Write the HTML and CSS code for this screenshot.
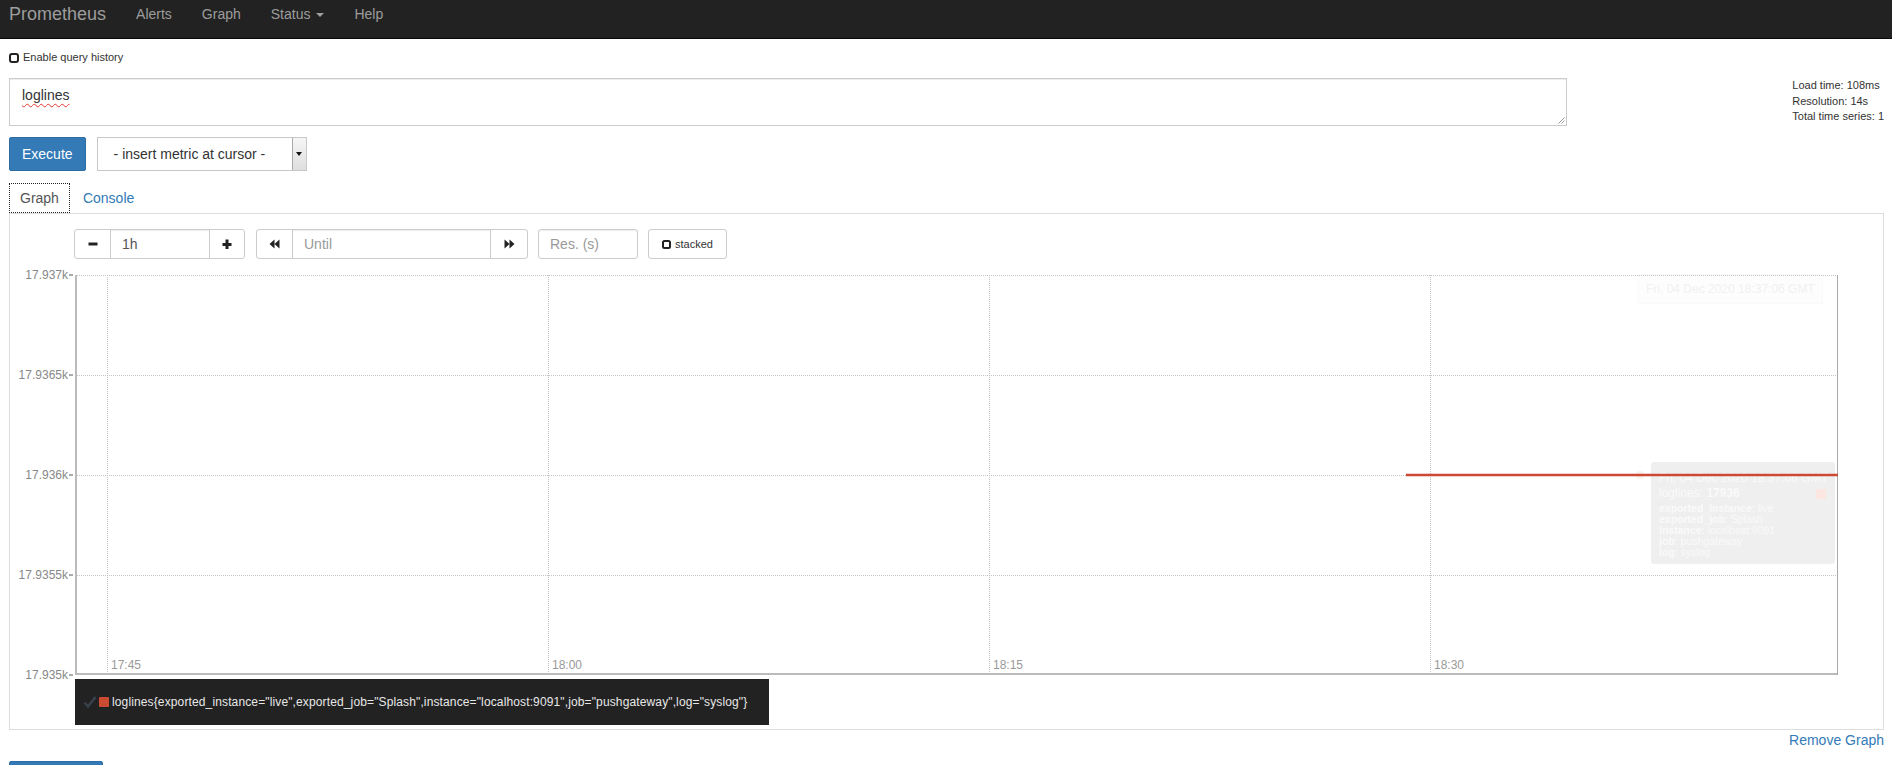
FILE: index.html
```html
<!DOCTYPE html>
<html lang="en">
	<head>
		<meta charset="utf-8">
		<title>Prometheus Time Series Collection and Processing Server</title>
		<link rel="stylesheet" href="styles.css">
	</head>
	<body>
		<nav class="navbar">
			<a class="brand" href="#">Prometheus</a>
			<a class="nav-link" href="#">Alerts</a>
			<a class="nav-link" href="#">Graph</a>
			<a class="nav-link" href="#">Status <span class="caret"></span></a>
			<a class="nav-link" href="#">Help</a>
		</nav>

		<div class="page">
			<label class="history-toggle"><span class="check-box"></span>Enable query history</label>

			<div class="query-row">
				<div class="expr-input">
					<span class="misspelled">loglines</span>
					<svg class="resize-grip" width="7" height="7" viewBox="0 0 7 7">
						<path d="M6.5 0.5 0.5 6.5M6.5 3.5 3.5 6.5" stroke="#999" stroke-width="1" fill="none"/>
					</svg>
				</div>
				<div class="eval-stats">
					<div>Load time: 108ms</div>
					<div>Resolution: 14s</div>
					<div>Total time series: 1</div>
				</div>
			</div>

			<div class="action-row">
				<button class="btn btn-primary">Execute</button>
				<div class="metric-select">
					<span class="metric-select-text">- insert metric at cursor -</span>
					<span class="select-arrow"></span>
				</div>
			</div>

			<ul class="tabs">
				<li class="tab active">Graph</li>
				<li class="tab"><a href="#">Console</a></li>
			</ul>

			<div class="tab-panel">
				<div class="graph-controls">
					<div class="input-group">
						<button class="ctl-btn first">
							<svg width="10" height="10" viewBox="0 0 10 10"><rect x="0.5" y="3.5" width="9" height="3" fill="#222"/></svg>
						</button>
						<input class="ctl-input range-input" type="text" value="1h">
						<button class="ctl-btn last">
							<svg width="10" height="10" viewBox="0 0 10 10"><path d="M3.5 0.5h3v3.5h3v3h-3v3h-3v-3h-3v-3h3z" fill="#222"/></svg>
						</button>
					</div>
					<div class="input-group time-group">
						<button class="ctl-btn first">
							<svg width="11" height="10" viewBox="0 0 11 10"><path d="M0.5 5 5.5 0.5v9zM5.5 5 10.5 0.5v9z" fill="#222"/></svg>
						</button>
						<input class="ctl-input until-input" type="text" placeholder="Until">
						<button class="ctl-btn last wide">
							<svg width="11" height="10" viewBox="0 0 11 10"><path d="M10.5 5 5.5 0.5v9zM5.5 5 0.5 0.5v9z" fill="#222"/></svg>
						</button>
					</div>
					<input class="ctl-input res-input" type="text" placeholder="Res. (s)">
					<button class="stacked-btn">
						<svg width="9" height="9" viewBox="0 0 9 9"><rect x="1" y="1" width="7" height="7" rx="1.5" fill="none" stroke="#222" stroke-width="2"/></svg>
						stacked
					</button>
				</div>

				<div class="graph-row">
					<div class="y-axis">
						<span class="y-tick">17.937k</span>
						<span class="y-tick">17.9365k</span>
						<span class="y-tick">17.936k</span>
						<span class="y-tick">17.9355k</span>
						<span class="y-tick">17.935k</span>
					</div>
					<div class="plot">
						<div class="x-label">Fri, 04 Dec 2020 18:37:06 GMT</div>
						<div class="hover-item">
							<div class="hover-date">Fri, 04 Dec 2020 18:37:06 GMT</div>
							<div class="hover-value"><span>loglines: <b>17936</b></span><span class="hover-swatch"></span></div>
							<div class="hover-attrs">
								<div><b>exported_instance</b>: live</div>
								<div><b>exported_job</b>: Splash</div>
								<div><b>instance</b>: localhost:9091</div>
								<div><b>job</b>: pushgateway</div>
								<div><b>log</b>: syslog</div>
							</div>
						</div>
						<svg class="plot-lines" width="1763" height="400" viewBox="0 0 1763 400">
							<g stroke="#c4c4c4" stroke-width="1" stroke-dasharray="1 1">
								<line x1="0" y1="0.5" x2="1763" y2="0.5"/>
								<line x1="0" y1="100.5" x2="1763" y2="100.5"/>
								<line x1="0" y1="200.5" x2="1763" y2="200.5"/>
								<line x1="0" y1="300.5" x2="1763" y2="300.5"/>
								<line x1="32.5" y1="0" x2="32.5" y2="400"/>
								<line x1="473.5" y1="0" x2="473.5" y2="400"/>
								<line x1="914.5" y1="0" x2="914.5" y2="400"/>
								<line x1="1355.5" y1="0" x2="1355.5" y2="400"/>
							</g>
							<line x1="1" y1="0" x2="1" y2="400" stroke="#bbb" stroke-width="2"/>
							<line x1="0" y1="399" x2="1763" y2="399" stroke="#bbb" stroke-width="2"/>
							<line x1="1762.5" y1="0" x2="1762.5" y2="400" stroke="#aaa" stroke-width="1"/>
							<g class="x-ticks">
								<text x="36" y="394">17:45</text>
								<text x="477" y="394">18:00</text>
								<text x="918" y="394">18:15</text>
								<text x="1359" y="394">18:30</text>
							</g>
							<circle cx="1565" cy="200" r="4" fill="#cb4b32" fill-opacity="0.08"/>
							<line x1="1331" y1="200" x2="1763" y2="200" stroke="#cc4a33" stroke-width="2.4"/>
						</svg>
					</div>
				</div>

				<div class="legend">
					<svg width="14" height="12" viewBox="0 0 14 12"><path d="M1.5 6.5 5 10.5 12.5 1" stroke="#39414d" stroke-width="2.4" fill="none"/></svg>
					<span class="legend-swatch"></span>
					<span class="legend-text">loglines{exported_instance="live",exported_job="Splash",instance="localhost:9091",job="pushgateway",log="syslog"}</span>
				</div>
			</div>

			<div class="remove-row"><a href="#">Remove Graph</a></div>
			<button class="btn btn-primary add-graph">Add Graph</button>
		</div>
	</body>
</html>
```

FILE: styles.css
```css
* {
	box-sizing: border-box;
}
html, body {
	margin: 0;
	overflow: hidden;
}
body {
	font-family: "Liberation Sans", Arial, sans-serif;
	font-size: 14px;
	line-height: 20px;
	color: #333;
	background: #fff;
}
a {
	color: #337ab7;
	text-decoration: none;
}

.navbar {
	display: flex;
	align-items: flex-start;
	height: 39px;
	padding: 4px 0 0 9px;
	background: #222;
	border-bottom: 1px solid #080808;
}
.brand {
	font-size: 18px;
	line-height: 20px;
	color: #9d9d9d;
}
.nav-link {
	padding: 0 15px;
	color: #9d9d9d;
}
.brand + .nav-link {
	margin-left: 15px;
}
.caret {
	display: inline-block;
	width: 0;
	height: 0;
	margin-left: 2px;
	vertical-align: middle;
	border-top: 4px solid;
	border-left: 4px solid transparent;
	border-right: 4px solid transparent;
}

.page {
	padding: 0 8px 0 9px;
}

.history-toggle {
	display: flex;
	align-items: center;
	gap: 4px;
	margin-top: 11px;
	font-size: 11px;
	line-height: 15px;
}
.check-box {
	width: 10px;
	height: 10px;
	border: 2px solid #222;
	border-radius: 3px;
}

.query-row {
	display: flex;
	align-items: flex-start;
	margin-top: 13px;
}
.expr-input {
	position: relative;
	flex: none;
	width: 1558px;
	height: 48px;
	padding: 6px 12px;
	border: 1px solid #ccc;
	box-shadow: inset 0 1px 1px rgba(0, 0, 0, 0.075);
}
.misspelled {
	text-decoration: underline wavy #e53935;
	text-decoration-thickness: 1px;
	text-underline-offset: 3px;
}
.resize-grip {
	position: absolute;
	right: 1px;
	bottom: 1px;
}
.eval-stats {
	margin-left: auto;
	font-size: 11px;
	line-height: 15.5px;
}

.action-row {
	display: flex;
	gap: 11px;
	margin-top: 11px;
}
.btn {
	font-family: inherit;
	font-size: 14px;
	line-height: 20px;
	padding: 6px 12px;
	border: 1px solid transparent;
	border-radius: 2px;
	cursor: pointer;
}
.btn-primary {
	color: #fff;
	background: #337ab7;
	border-color: #2e6da4;
}
.metric-select {
	display: flex;
	width: 210px;
	height: 34px;
	border: 1px solid #c8c8c8;
	background: #fff;
}
.metric-select-text {
	flex: 1;
	padding-left: 16px;
	line-height: 32px;
	white-space: nowrap;
}
.select-arrow {
	display: flex;
	align-items: center;
	justify-content: center;
	width: 14px;
	border-left: 1px solid #a9a9a9;
	background: linear-gradient(#f6f6f6, #dedede);
}
.select-arrow::after {
	content: "";
	border-top: 4px solid #111;
	border-left: 3px solid transparent;
	border-right: 3px solid transparent;
}

.tabs {
	display: flex;
	list-style: none;
	margin: 12px 0 0;
	padding: 0;
	border-bottom: 1px solid #ddd;
}
.tab {
	margin-right: 2px;
	padding: 4px 10px;
	border: 1px solid transparent;
}
.tab.active {
	color: #555;
	border: 1px dotted #222;
}

.tab-panel {
	padding: 15px 0 4px;
	border: 1px solid #ddd;
	border-top: 0;
}

.graph-controls {
	display: flex;
	height: 30px;
	padding-left: 64px;
}
.input-group {
	display: flex;
}
.time-group {
	margin-left: 11px;
}
.ctl-btn {
	display: flex;
	align-items: center;
	justify-content: center;
	width: 37px;
	height: 30px;
	padding: 0;
	background: #fff;
	border: 1px solid #ccc;
}
.ctl-btn.first {
	margin-right: -1px;
	border-radius: 3px 0 0 3px;
}
.ctl-btn.last {
	width: 36px;
	margin-left: -1px;
	border-radius: 0 3px 3px 0;
}
.ctl-btn.last.wide {
	width: 38px;
}
.ctl-input {
	height: 30px;
	padding: 0 11px;
	font-family: inherit;
	font-size: 14px;
	color: #555;
	border: 1px solid #ccc;
	box-shadow: inset 0 1px 1px rgba(0, 0, 0, 0.075);
	outline: none;
}
.ctl-input::placeholder {
	color: #999;
}
.range-input {
	width: 100px;
}
.until-input {
	width: 199px;
}
.res-input {
	width: 100px;
	margin-left: 10px;
	border-radius: 3px;
}
.stacked-btn {
	display: flex;
	align-items: center;
	gap: 4px;
	width: 79px;
	height: 30px;
	margin-left: 10px;
	padding: 0 0 0 13px;
	font-family: inherit;
	font-size: 11px;
	color: #333;
	background: #fff;
	border: 1px solid #ccc;
	border-radius: 3px;
}

.graph-row {
	display: flex;
	margin-top: 16px;
	padding-right: 45px;
}
.y-axis {
	display: flex;
	flex: none;
	flex-direction: column;
	justify-content: space-between;
	width: 65px;
	margin: -10px 0;
	padding-right: 2px;
	font-size: 12px;
	color: #888;
}
.y-tick {
	display: flex;
	align-items: center;
	justify-content: flex-end;
	height: 20px;
}
.y-tick::after {
	content: "";
	width: 4px;
	height: 2px;
	margin-left: 1px;
	background: #aaa;
}
.plot {
	position: relative;
	flex: 1;
	height: 400px;
}
.plot-lines {
	position: relative;
	z-index: 1;
	display: block;
	overflow: visible;
}
.x-ticks {
	font-family: "Liberation Sans", Arial, sans-serif;
	font-size: 12px;
	fill: #999;
}
.x-label {
	position: absolute;
	left: 1564px;
	top: 0;
	height: 28px;
	padding: 0 7px;
	font-size: 12px;
	line-height: 28px;
	white-space: nowrap;
	color: #f1f1f1;
	background: #fdfdfd;
	box-shadow: 0 0 0 1px #fafafa;
}
.hover-item {
	position: absolute;
	left: 1576px;
	top: 187px;
	width: 184px;
	height: 102px;
	padding: 8px 9px 6px 8px;
	font-size: 12px;
	color: #fafafa;
	background: #efefef;
	border-radius: 3px;
}
.hover-date {
	line-height: 16px;
	white-space: nowrap;
}
.hover-value {
	display: flex;
	align-items: center;
	justify-content: space-between;
	line-height: 15px;
}
.hover-swatch {
	width: 10px;
	height: 10px;
	background: #fbe6e2;
}
.hover-attrs {
	margin-top: 2px;
	font-size: 10.5px;
	line-height: 11px;
}

.legend {
	display: flex;
	align-items: center;
	width: 694px;
	height: 46px;
	margin: 4px 0 0 65px;
	padding-left: 8px;
	font-size: 12px;
	color: #e8e8e8;
	background: #222;
}
.legend-swatch {
	width: 10px;
	height: 10px;
	margin: 0 3px 0 2px;
	border-radius: 1px;
	background: #cb4b32;
}
.legend-text {
	white-space: nowrap;
	letter-spacing: 0.13px;
}

.remove-row {
	text-align: right;
}
.add-graph {
	margin-top: 11px;
}
```
